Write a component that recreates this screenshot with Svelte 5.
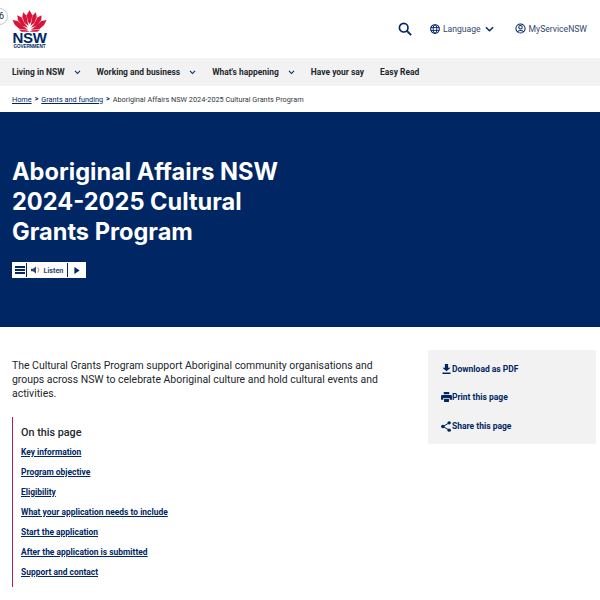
<script>
  const navItems = [
    { label: 'Living in NSW', caret: true },
    { label: 'Working and business', caret: true },
    { label: "What's happening", caret: true },
    { label: 'Have your say', caret: false },
    { label: 'Easy Read', caret: false }
  ];
  const toc = [
    'Key information',
    'Program objective',
    'Eligibility',
    'What your application needs to include',
    'Start the application',
    'After the application is submitted',
    'Support and contact'
  ];
</script>

<div class="page">
  <div class="skip">6</div>
  <header class="top">
    <a class="logo" href="#top">
      <svg class="waratah" viewBox="0 0 36 22" width="35" height="22">
        <g fill="#d7153a">
          <path d="M18 0 L21 5 L19.5 12 L18 14 L16.5 12 L15 5 Z" />
          <path d="M11.5 2 L15 5.5 L16 12 L17 16 L13 13 L10.5 7 Z" />
          <path d="M24.5 2 L21 5.5 L20 12 L19 16 L23 13 L25.5 7 Z" />
          <path d="M5.5 5 L10 7.5 L13 13.5 L16.5 18 L10 15.5 L6 10 Z" />
          <path d="M30.5 5 L26 7.5 L23 13.5 L19.5 18 L26 15.5 L30 10 Z" />
          <path d="M0.5 10 L6 11 L11 16 L16.5 20 L8 19.5 L3 15 Z" />
          <path d="M35.5 10 L30 11 L25 16 L19.5 20 L28 19.5 L33 15 Z" />
          <path d="M7 20 L15 20.5 L18 22 L21 20.5 L29 20 L26 22 L10 22 Z" />
        </g>
      </svg>
      <span class="nsw">NSW</span>
      <span class="gov">GOVERNMENT</span>
    </a>
    <div class="tools">
      <svg class="search" viewBox="0 0 16 16" width="14" height="14">
        <circle cx="6.5" cy="6.5" r="4.9" fill="none" stroke="#002664" stroke-width="1.9" />
        <path d="M10 10 L15 15" stroke="#002664" stroke-width="2.1" />
      </svg>
      <div class="tool lang">
        <svg viewBox="0 0 12 12" width="10" height="10">
          <circle cx="6" cy="6" r="5.2" fill="none" stroke="#002664" stroke-width="1.3" />
          <ellipse cx="6" cy="6" rx="2.2" ry="5" fill="none" stroke="#002664" stroke-width="1.1" />
          <path d="M1 4.3 H11 M1 7.7 H11" stroke="#002664" stroke-width="1.1" />
        </svg>
        <span>Language</span>
        <svg class="lang-caret" viewBox="0 0 10 6" width="9" height="6">
          <path d="M1 1 L5 5 L9 1" fill="none" stroke="#002664" stroke-width="1.6" />
        </svg>
      </div>
      <div class="tool">
        <svg viewBox="0 0 12 12" width="11" height="11">
          <circle cx="6" cy="6" r="5" fill="none" stroke="#002664" stroke-width="1.1" />
          <circle cx="6" cy="4.7" r="1.9" fill="none" stroke="#002664" stroke-width="1.1" />
          <path d="M2.8 9.8 C3.5 7.6 8.5 7.6 9.2 9.8" fill="none" stroke="#002664" stroke-width="1.1" />
        </svg>
        <span>MyServiceNSW</span>
      </div>
    </div>
  </header>

  <nav class="mainnav">
    {#each navItems as item}
      <div class="navitem">
        <span>{item.label}</span>
        {#if item.caret}
          <svg viewBox="0 0 8 6" width="7" height="5">
            <path d="M1 1 L4 4.2 L7 1" fill="none" stroke="#002664" stroke-width="1.3" />
          </svg>
        {/if}
      </div>
    {/each}
  </nav>

  <div class="crumbs">
    <a href="#home">Home</a>
    <span class="sep">&gt;</span>
    <a href="#grants">Grants and funding</a>
    <span class="sep">&gt;</span>
    <span>Aboriginal Affairs NSW 2024-2025 Cultural Grants Program</span>
  </div>

  <section class="hero">
    <h1>Aboriginal Affairs NSW 2024-2025 Cultural Grants Program</h1>
    <div class="listen">
      <div class="cell menu">
        <svg viewBox="0 0 10 8" width="10" height="8">
          <path d="M0 1 H10 M0 4 H10 M0 7 H10" stroke="#002664" stroke-width="2" />
        </svg>
      </div>
      <div class="cell say">
        <svg viewBox="0 0 10 8" width="10" height="8">
          <path d="M0 2.7 H2 L5 0.5 V7.5 L2 5.3 H0 Z" fill="#33456e" />
          <path d="M6.5 1.5 C8 3 8 5 6.5 6.5" fill="none" stroke="#e8a07a" stroke-width="1.2" />
        </svg>
        <span>Listen</span>
      </div>
      <div class="cell play">
        <svg viewBox="0 0 6 8" width="6" height="7">
          <path d="M0 0 L6 4 L0 8 Z" fill="#002664" />
        </svg>
      </div>
    </div>
  </section>

  <main class="content">
    <div class="body">
      <p class="intro">The Cultural Grants Program support Aboriginal community organisations and groups across NSW to celebrate Aboriginal culture and hold cultural events and activities.</p>
      <div class="onpage">
        <h2>On this page</h2>
        <ul>
          {#each toc as link}
            <li><a href="#section">{link}</a></li>
          {/each}
        </ul>
      </div>
    </div>
    <aside class="actions">
      <div class="action">
        <span class="icon">
          <svg viewBox="0 0 10 11" width="9" height="10">
            <path d="M3.2 0 H6.8 V4 H9.5 L5 8 L0.5 4 H3.2 Z M0.5 9.5 H9.5 V11 H0.5 Z" fill="#002664" />
          </svg>
        </span>
        <span>Download as PDF</span>
      </div>
      <div class="action">
        <span class="icon">
          <svg viewBox="0 0 12 11" width="11" height="10">
            <path d="M3 0 H9 V2.5 H3 Z M1.2 3.2 H10.8 A1.2 1.2 0 0 1 12 4.4 V8.5 H9.5 V6.5 H2.5 V8.5 H0 V4.4 A1.2 1.2 0 0 1 1.2 3.2 Z M3.3 7.3 H8.7 V11 H3.3 Z" fill="#002664" />
          </svg>
        </span>
        <span>Print this page</span>
      </div>
      <div class="action">
        <span class="icon">
          <svg viewBox="0 0 11 12" width="10" height="11">
            <path d="M9 2 L2 6 L9 10" fill="none" stroke="#002664" stroke-width="1.1" />
            <circle cx="9" cy="2" r="1.9" fill="#002664" />
            <circle cx="2" cy="6" r="1.9" fill="#002664" />
            <circle cx="9" cy="10" r="1.9" fill="#002664" />
          </svg>
        </span>
        <span>Share this page</span>
      </div>
    </aside>
  </main>
</div>

<style>
  :global(body) {
    margin: 0;
    background: #fff;
  }
  .page {
    position: relative;
    width: 600px;
    height: 600px;
    overflow: hidden;
    font-family: "Roboto", "Liberation Sans", sans-serif;
    color: #22272b;
  }
  .skip {
    position: absolute;
    left: -9px;
    top: 8px;
    width: 17px;
    height: 17px;
    box-sizing: border-box;
    border: 1px solid #c6c8ca;
    border-radius: 50%;
    background: #fff;
    font-size: 9px;
    line-height: 15px;
    text-align: right;
    padding-right: 3px;
  }
  .top {
    height: 58px;
    display: flex;
    justify-content: space-between;
    align-items: flex-start;
    padding: 0 13px 0 12px;
    box-sizing: border-box;
  }
  .logo {
    display: flex;
    flex-direction: column;
    align-items: center;
    width: 35px;
    margin-top: 10px;
    text-decoration: none;
    color: #002664;
  }
  .waratah {
    display: block;
  }
  .nsw {
    font-family: "Liberation Sans", sans-serif;
    font-weight: 700;
    font-size: 15px;
    line-height: 12px;
    letter-spacing: -0.4px;
  }
  .gov {
    font-family: "Liberation Sans", sans-serif;
    font-weight: 700;
    font-size: 4.6px;
    line-height: 5px;
    white-space: nowrap;
    letter-spacing: -0.1px;
  }
  .tools {
    display: flex;
    align-items: center;
    height: 57px;
    font-size: 8.6px;
    color: #33456e;
  }
  .search {
    margin-right: 18px;
  }
  .tool {
    display: flex;
    align-items: center;
    gap: 3px;
  }
  .lang {
    margin-right: 21px;
  }
  .lang-caret {
    margin-left: 1px;
  }
  .mainnav {
    height: 28px;
    background: #f2f2f2;
    display: flex;
    align-items: center;
    padding-left: 12px;
    gap: 16px;
    font-size: 8.45px;
    font-weight: 700;
    color: #22272b;
  }
  .navitem {
    display: flex;
    align-items: center;
    gap: 9px;
    white-space: nowrap;
  }
  .crumbs {
    height: 26px;
    display: flex;
    align-items: center;
    gap: 3px;
    padding-left: 12px;
    font-size: 7.3px;
    color: #33373b;
    white-space: nowrap;
  }
  .crumbs a {
    color: #002664;
  }
  .sep {
    font-size: 7px;
    font-weight: 700;
    color: #002664;
  }
  .hero {
    height: 215px;
    box-sizing: border-box;
    background: #002664;
    padding: 45px 12px 0;
  }
  h1 {
    margin: 0;
    width: 290px;
    color: #fff;
    font-family: "Inter", "Liberation Sans", sans-serif;
    font-size: 23.6px;
    line-height: 30px;
    font-weight: 700;
  }
  .listen {
    display: flex;
    margin-top: 15px;
    width: 74px;
    height: 16px;
    background: #fff;
    border: 1px solid #fff;
    box-sizing: border-box;
    color: #33456e;
  }
  .cell {
    display: flex;
    align-items: center;
    justify-content: center;
    border-right: 1px solid #002664;
    box-sizing: border-box;
  }
  .menu {
    width: 14px;
  }
  .say {
    width: 41px;
    gap: 3px;
    font-size: 7.2px;
    font-weight: 700;
  }
  .play {
    flex: 1;
    border-right: 0;
  }
  .content {
    display: flex;
    justify-content: space-between;
    padding: 23px 4px 0 12px;
  }
  .body {
    width: 375px;
  }
  .intro {
    margin: 9px 0 0;
    font-size: 10.45px;
    line-height: 14px;
    color: #22272b;
  }
  .onpage {
    margin-top: 16px;
    height: 170px;
    box-sizing: border-box;
    border-left: 1px solid #a8244a;
    padding: 9px 0 0 8px;
  }
  h2 {
    margin: 0 0 6px;
    font-size: 10.8px;
    line-height: 14px;
    font-weight: 500;
  }
  ul {
    list-style: none;
    margin: 0;
    padding: 0;
  }
  li {
    height: 20px;
    line-height: 12px;
    font-size: 8.45px;
    font-weight: 700;
  }
  li a {
    color: #002664;
  }
  .actions {
    width: 168px;
    height: 94px;
    box-sizing: border-box;
    background: #f2f2f2;
    border-radius: 2px;
    padding: 5px 0 3px 12px;
    display: flex;
    flex-direction: column;
    justify-content: space-around;
  }
  .action {
    display: flex;
    align-items: center;
    font-size: 8.5px;
    font-weight: 700;
    color: #002664;
  }
  .icon {
    width: 12px;
    display: flex;
    justify-content: center;
  }
</style>
